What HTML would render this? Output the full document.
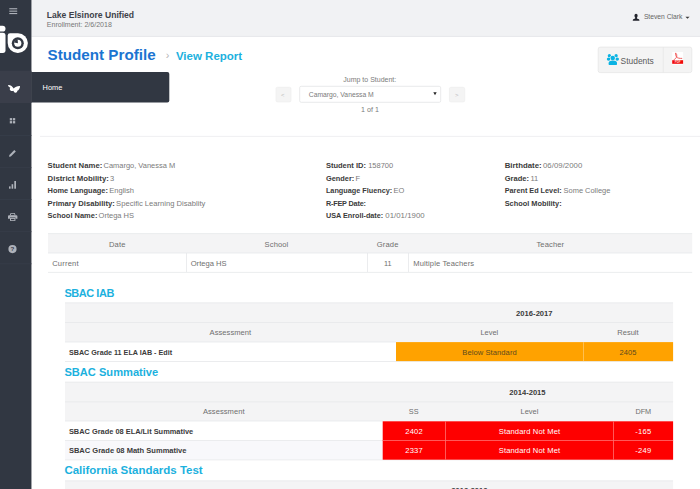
<!DOCTYPE html>
<html><head><meta charset="utf-8"><title>Student Profile</title>
<style>
*{box-sizing:border-box;margin:0;padding:0}
html,body{width:700px;height:489px;overflow:hidden;background:#fff;font-family:"Liberation Sans",sans-serif;color:#777}
.a{position:absolute}
.t{position:absolute;white-space:nowrap;line-height:1}
</style></head><body>
<svg class="a" style="left:0;top:0" width="700" height="489" viewBox="0 0 700 489">
  <!-- chrome -->
  <rect x="31.4" y="0" width="668.6" height="36" fill="#f1f2f4"/>
  <rect x="31.4" y="35.9" width="668.6" height="1" fill="#e6e7ea"/>
  <rect x="0" y="0" width="31.45" height="489" fill="#313742"/>
  <!-- active row + flyout -->
  <rect x="0" y="70.7" width="31.45" height="32.3" fill="#3a3e4a"/>
  <path d="M31.2 72 H167.3 Q169.3 72 169.3 74 V100.5 Q169.3 102.5 167.3 102.5 H31.2 Z" fill="#313742"/>
  <g fill="#383e4a">
    <rect x="0" y="135" width="31.45" height="0.8"/>
    <rect x="0" y="167.3" width="31.45" height="0.8"/>
    <rect x="0" y="199.2" width="31.45" height="0.8"/>
    <rect x="0" y="231.3" width="31.45" height="0.8"/>
    <rect x="0" y="263.4" width="31.45" height="0.8"/>
  </g>
  <!-- hamburger -->
  <g fill="#aeb2ba">
    <rect x="9.3" y="8.2" width="7.9" height="1.1"/><rect x="9.3" y="10.6" width="7.9" height="1.1"/><rect x="9.3" y="13" width="7.9" height="1.1"/>
  </g>
  <!-- logo -->
  <g fill="#fff">
    <rect x="-6" y="25.7" width="11.5" height="5.9" rx="2.9"/>
    <rect x="-6" y="32.8" width="11.5" height="20.1" rx="2.6"/>
    <path d="M7.7 35.6 Q7.7 33.3 10 33.3 L18 33.3 A9.9 9.8 0 0 1 18 52.9 L17.6 52.9 A9.9 9.9 0 0 1 7.7 43 Z"/>
  </g>
  <circle cx="17.8" cy="43.25" r="6" fill="#313742"/>
  <circle cx="17.8" cy="43.25" r="3.55" fill="#fff"/>
  <path d="M17.9 43.3 L14.1 42.6 A3.8 3.8 0 0 1 17.7 39.5 Z" fill="#313742"/>
  <!-- butterfly -->
  <path fill="#fff" d="M8 85 C10.5 84.8 12.6 86.6 13.7 88.6 C15 87 17.5 85.8 20 86 C20 88.5 18.8 90.2 17.3 90.8 C17.4 92.2 16 93.3 14.6 92.6 C14 92.2 13.6 91.4 13.5 90.8 C12.6 91.3 11 91.2 10.2 90.2 C9.4 89.2 9.8 88.2 10.4 87.8 C9.2 87.3 8.2 86.4 8 85 Z"/>
  <!-- grid -->
  <g fill="#aeb2ba">
    <rect x="9.8" y="118.1" width="2.3" height="2.3"/><rect x="12.9" y="118.1" width="2.3" height="2.3"/>
    <rect x="9.8" y="121.1" width="2.3" height="2.3"/><rect x="12.9" y="121.1" width="2.3" height="2.3"/>
  </g>
  <!-- pencil -->
  <path fill="#aeb2ba" d="M9 156.8 L9.4 155 L14.3 150 L15.8 151.5 L10.8 156.4 Z"/>
  <!-- bar chart -->
  <g fill="#aeb2ba">
    <rect x="9" y="186.4" width="1.6" height="2.3"/><rect x="11.6" y="184.2" width="1.6" height="4.5"/><rect x="14.3" y="181" width="1.7" height="7.7"/>
  </g>
  <!-- print -->
  <g fill="#aeb2ba">
    <path d="M10.6 213 H14.8 L15.6 215.2 H9.8 Z"/>
    <path d="M9 215.2 h7.4 a1 1 0 0 1 1 1 v2.6 h-1.9 v-1.3 h-5.6 v1.3 h-1.9 v-2.6 a1 1 0 0 1 1 -1 Z"/>
    <rect x="10" y="218" width="5.4" height="2.9"/>
  </g>
  <rect x="11" y="213.8" width="3.4" height="1.2" fill="#313742"/>
  <rect x="11" y="218.9" width="3.4" height="1.2" fill="#313742"/>
  <!-- help -->
  <circle cx="12.5" cy="249.1" r="4.1" fill="#aeb2ba"/>
  <text x="12.5" y="251.4" text-anchor="middle" font-family="Liberation Sans, sans-serif" font-weight="bold" font-size="6.2" fill="#313742">?</text>

  <!-- user icon + caret -->
  <ellipse cx="636.05" cy="15.75" rx="1.6" ry="1.95" fill="#23252d"/>
  <path fill="#23252d" d="M632.8 20.7 L632.8 19.9 Q632.8 18.9 634.6 18.7 L635.2 18.2 L635.2 17 L636.9 17 L636.9 18.2 L637.5 18.7 Q639.4 18.9 639.4 19.9 L639.4 20.7 Z"/>
  <path fill="#3a3a3a" d="M685.4 16.8 L689.6 16.8 L687.5 18.7 Z"/>

  <!-- buttons -->
  <path d="M600.2 47.1 H689.8 Q691.8 47.1 691.8 49.1 V70.6 Q691.8 72.6 689.8 72.6 H600.2 Q598.2 72.6 598.2 70.6 V49.1 Q598.2 47.1 600.2 47.1 Z" fill="#f4f4f4" stroke="#e6e6e6" stroke-width="0.8"/>
  <rect x="662.8" y="47.1" width="0.8" height="25.5" fill="#e6e6e6"/>
  <g fill="#0bb3e3">
    <circle cx="609.4" cy="55.7" r="1.65"/>
    <circle cx="616.1" cy="55.7" r="1.65"/>
    <ellipse cx="608.6" cy="59.1" rx="1.8" ry="1.6"/>
    <ellipse cx="617.2" cy="59.1" rx="1.8" ry="1.6"/>
    <circle cx="612.75" cy="57.95" r="2.75" fill="#f4f4f4"/>
    <circle cx="612.75" cy="57.95" r="2.3"/>
    <path d="M608.6 63 Q608.6 60.5 612.8 60.5 Q617 60.5 617 63 L617 63.9 Q617 65.1 615.8 65.1 L609.8 65.1 Q608.6 65.1 608.6 63.9 Z"/>
  </g>
  <!-- pdf icon -->
  <rect x="672.2" y="52" width="10.9" height="12.8" fill="#fff"/>
  <rect x="672.2" y="60.2" width="10.9" height="3.6" fill="#f00a0a"/>
  <g fill="none" stroke="#ee3b3b" stroke-width="0.95" stroke-linecap="round" stroke-linejoin="round" opacity="0.85">
    <path d="M675.7 53.3 C676.9 53.4 676.9 55.4 676.6 57 C677.6 58.2 679.6 58.5 681.8 58.4"/>
    <path d="M676.6 57 C676 58.2 675.2 59.2 674.1 59.6"/>
    <path d="M675.7 53.3 C675.2 54.6 676 56.2 676.6 57"/>
  </g>
  <text x="677.7" y="63.1" text-anchor="middle" font-family="Liberation Sans, sans-serif" font-weight="bold" font-size="3" fill="#ffd0d0">PDF</text>

  <!-- jump -->
  <rect x="276" y="87.3" width="15" height="14.6" rx="1.5" fill="#f4f4f4" stroke="#eeeeee" stroke-width="0.7"/>
  <rect x="449.4" y="87.3" width="15.3" height="14.6" rx="1.5" fill="#f4f4f4" stroke="#eeeeee" stroke-width="0.7"/>
  <rect x="299.7" y="86.3" width="141" height="16" rx="1.5" fill="#fff" stroke="#e3e4e6" stroke-width="0.8"/>
  <path d="M433.3 92.2 L436.7 92.2 L435 95.2 Z" fill="#222"/>
  <rect x="40" y="135.9" width="660" height="0.8" fill="#ececee"/>

  <!-- enrollment table -->
  <rect x="48" y="233.6" width="644.2" height="19.4" fill="#f4f4f5"/>
  <g fill="#e6e8ea">
    <rect x="48" y="233.3" width="644.2" height="0.8"/>
    <rect x="48" y="252.6" width="644.2" height="0.8"/>
    <rect x="48" y="271.9" width="644.2" height="0.8"/>
    <rect x="186" y="253" width="0.8" height="19"/>
    <rect x="367.2" y="253" width="0.8" height="19"/>
    <rect x="408" y="253" width="0.8" height="19"/>
  </g>

  <!-- IAB table -->
  <rect x="65" y="302.8" width="608.1" height="39.2" fill="#f4f4f5"/>
  <g fill="#e6e8ea">
    <rect x="65" y="302.5" width="608.1" height="0.8"/>
    <rect x="65" y="322.1" width="608.1" height="0.8"/>
    <rect x="65" y="341.6" width="331" height="0.8"/>
    <rect x="65" y="361" width="608.1" height="0.8"/>
  </g>
  <rect x="396" y="342.1" width="277.1" height="19" fill="#ffa200"/>
  <rect x="583" y="342.1" width="0.8" height="19" fill="#ffc766"/>

  <!-- Summative table -->
  <rect x="65" y="382" width="608.1" height="39" fill="#f4f4f5"/>
  <rect x="65" y="440.8" width="318" height="18.8" fill="#f8f8fb"/>
  <g fill="#e6e8ea">
    <rect x="65" y="381.7" width="608.1" height="0.8"/>
    <rect x="65" y="401.5" width="608.1" height="0.8"/>
    <rect x="65" y="420.6" width="318" height="0.8"/>
    <rect x="65" y="440.1" width="318" height="0.8"/>
    <rect x="65" y="459.5" width="608.1" height="0.8"/>
  </g>
  <rect x="382.7" y="421.3" width="290.4" height="38.4" fill="#fe0000"/>
  <g fill="#ff7070">
    <rect x="382.7" y="440.1" width="290.4" height="0.8"/>
    <rect x="445" y="421.3" width="0.8" height="38.4"/>
    <rect x="613.2" y="421.3" width="0.8" height="38.4"/>
  </g>

  <!-- CST table top -->
  <rect x="65" y="480.8" width="608.1" height="9" fill="#f4f4f5"/>
  <rect x="65" y="480.5" width="608.1" height="0.8" fill="#e6e8ea"/>
</svg>

<div class="t" style="left:46.8px;top:10px;font-size:8.58px;line-height:10px;color:#3e4249;font-weight:bold;">Lake Elsinore Unified</div>
<div class="t" style="left:46.8px;top:21px;font-size:7.05px;line-height:7px;color:#777;">Enrollment: 2/6/2018</div>
<div class="t" style="left:643.9px;top:13px;font-size:6.72px;line-height:7px;color:#666;">Steven Clark</div>
<div class="t" style="left:47.6px;top:46px;font-size:15.19px;line-height:17px;color:#1b74d1;font-weight:bold;">Student Profile</div>
<div class="t" style="left:165.7px;top:49px;font-size:11px;line-height:12px;color:#b5b5b5;">›</div>
<div class="t" style="left:175.9px;top:50px;font-size:11.5px;line-height:12px;color:#1cb1de;font-weight:bold;">View Report</div>
<div class="t" style="left:620.6px;top:56px;font-size:8.44px;line-height:10px;color:#5a5a5a;letter-spacing:-0.01px;">Students</div>
<div class="t" style="left:42.6px;top:83px;font-size:7.4px;line-height:9px;color:#fff;">Home</div>
<div class="t" style="left:343.3px;top:76px;font-size:7.01px;line-height:7px;color:#7b7b7b;">Jump to Student:</div>
<div class="t" style="left:308.8px;top:91px;font-size:6.79px;line-height:7px;color:#7b7b7b;letter-spacing:-0.01px;">Camargo, Vanessa M</div>
<div class="t" style="left:361.0px;top:106px;font-size:7.15px;line-height:8px;color:#7b7b7b;">1 of 1</div>
<div class="t" style="left:281.0px;top:92px;font-size:6.0px;line-height:6px;color:#bbb;">&lt;</div>
<div class="t" style="left:455.0px;top:92px;font-size:6.0px;line-height:6px;color:#bbb;">&gt;</div>
<div class="t" style="left:47.6px;top:161px;font-size:7.76px;line-height:9px;color:#3b3b3b;font-weight:bold;">Student Name:</div>
<div class="t" style="left:103.5px;top:161px;font-size:7.48px;line-height:9px;color:#7b7b7b;">Camargo, Vanessa M</div>
<div class="t" style="left:47.6px;top:174px;font-size:7.8px;line-height:9px;color:#3b3b3b;letter-spacing:0.01px;font-weight:bold;">District Mobility:</div>
<div class="t" style="left:110.0px;top:174px;font-size:7.5px;line-height:9px;color:#7b7b7b;">3</div>
<div class="t" style="left:47.6px;top:186px;font-size:7.45px;line-height:9px;color:#3b3b3b;font-weight:bold;">Home Language:</div>
<div class="t" style="left:109.2px;top:186px;font-size:7.57px;line-height:9px;color:#7b7b7b;">English</div>
<div class="t" style="left:47.6px;top:199px;font-size:7.67px;line-height:9px;color:#3b3b3b;font-weight:bold;">Primary Disability:</div>
<div class="t" style="left:116.1px;top:199px;font-size:7.62px;line-height:9px;color:#7b7b7b;">Specific Learning Disablity</div>
<div class="t" style="left:47.6px;top:211px;font-size:7.48px;line-height:9px;color:#3b3b3b;font-weight:bold;">School Name:</div>
<div class="t" style="left:98.6px;top:211px;font-size:7.5px;line-height:9px;color:#7b7b7b;">Ortega HS</div>
<div class="t" style="left:325.9px;top:161px;font-size:7.53px;line-height:9px;color:#3b3b3b;font-weight:bold;">Student ID:</div>
<div class="t" style="left:368.2px;top:161px;font-size:7.51px;line-height:9px;color:#7b7b7b;">158700</div>
<div class="t" style="left:325.9px;top:174px;font-size:7.42px;line-height:9px;color:#3b3b3b;font-weight:bold;">Gender:</div>
<div class="t" style="left:355.4px;top:174px;font-size:7.5px;line-height:9px;color:#7b7b7b;">F</div>
<div class="t" style="left:325.9px;top:186px;font-size:7.29px;line-height:9px;color:#3b3b3b;font-weight:bold;">Language Fluency:</div>
<div class="t" style="left:393.4px;top:186px;font-size:7.5px;line-height:9px;color:#7b7b7b;">EO</div>
<div class="t" style="left:325.9px;top:199px;font-size:7.27px;line-height:9px;color:#3b3b3b;letter-spacing:-0.18px;font-weight:bold;">R-FEP Date:</div>
<div class="t" style="left:325.9px;top:211px;font-size:7.27px;line-height:9px;color:#3b3b3b;letter-spacing:-0.01px;font-weight:bold;">USA Enroll-date:</div>
<div class="t" style="left:385.3px;top:211px;font-size:7.8px;line-height:9px;color:#7b7b7b;letter-spacing:0.03px;">01/01/1900</div>
<div class="t" style="left:504.7px;top:161px;font-size:7.8px;line-height:9px;color:#3b3b3b;letter-spacing:0.02px;font-weight:bold;">Birthdate:</div>
<div class="t" style="left:543.0px;top:161px;font-size:7.8px;line-height:9px;color:#7b7b7b;letter-spacing:0.03px;">06/09/2000</div>
<div class="t" style="left:504.7px;top:174px;font-size:7.52px;line-height:9px;color:#3b3b3b;font-weight:bold;">Grade:</div>
<div class="t" style="left:530.4px;top:174px;font-size:7.5px;line-height:9px;color:#7b7b7b;">11</div>
<div class="t" style="left:504.7px;top:186px;font-size:7.28px;line-height:9px;color:#3b3b3b;font-weight:bold;">Parent Ed Level:</div>
<div class="t" style="left:563.6px;top:186px;font-size:7.44px;line-height:9px;color:#7b7b7b;">Some College</div>
<div class="t" style="left:504.7px;top:199px;font-size:7.39px;line-height:9px;color:#3b3b3b;font-weight:bold;">School Mobility:</div>
<div class="t" style="left:109.0px;top:240px;font-size:7.59px;line-height:9px;color:#6f6f6f;letter-spacing:0.13px;">Date</div>
<div class="t" style="left:264.6px;top:240px;font-size:7.59px;line-height:9px;color:#6f6f6f;letter-spacing:0.10px;">School</div>
<div class="t" style="left:376.7px;top:240px;font-size:7.59px;line-height:9px;color:#6f6f6f;letter-spacing:0.16px;">Grade</div>
<div class="t" style="left:536.4px;top:240px;font-size:7.59px;line-height:9px;color:#6f6f6f;letter-spacing:0.12px;">Teacher</div>
<div class="t" style="left:52.2px;top:259px;font-size:7.59px;line-height:9px;color:#6f6f6f;letter-spacing:0.19px;">Current</div>
<div class="t" style="left:190.7px;top:259px;font-size:7.59px;line-height:9px;color:#6f6f6f;letter-spacing:0.01px;">Ortega HS</div>
<div class="t" style="left:384.0px;top:259px;font-size:7.3px;line-height:9px;color:#6f6f6f;">11</div>
<div class="t" style="left:413.2px;top:259px;font-size:7.59px;line-height:9px;color:#6f6f6f;letter-spacing:0.13px;">Multiple Teachers</div>
<div class="t" style="left:64.4px;top:287px;font-size:10.96px;line-height:12px;color:#1cb1de;letter-spacing:-0.43px;font-weight:bold;">SBAC IAB</div>
<div class="t" style="left:64.4px;top:366px;font-size:11.11px;line-height:12px;color:#1cb1de;font-weight:bold;">SBAC Summative</div>
<div class="t" style="left:64.4px;top:464px;font-size:11.49px;line-height:12px;color:#1cb1de;font-weight:bold;">California Standards Test</div>
<div class="t" style="left:516.1px;top:309px;font-size:7.59px;line-height:9px;color:#3b3b3b;letter-spacing:0.03px;font-weight:bold;">2016-2017</div>
<div class="t" style="left:209.6px;top:328px;font-size:7.59px;line-height:9px;color:#6f6f6f;letter-spacing:0.04px;">Assessment</div>
<div class="t" style="left:480.4px;top:328px;font-size:7.46px;line-height:9px;color:#6f6f6f;">Level</div>
<div class="t" style="left:617.3px;top:328px;font-size:7.53px;line-height:9px;color:#6f6f6f;">Result</div>
<div class="t" style="left:68.9px;top:348px;font-size:7.19px;line-height:9px;color:#3b3b3b;font-weight:bold;">SBAC Grade 11 ELA IAB - Edit</div>
<div class="t" style="left:462.3px;top:348px;font-size:7.59px;line-height:9px;color:#5d4a1e;letter-spacing:0.07px;">Below Standard</div>
<div class="t" style="left:619.6px;top:348px;font-size:7.52px;line-height:9px;color:#5d4a1e;">2405</div>
<div class="t" style="left:509.3px;top:388px;font-size:7.59px;line-height:9px;color:#3b3b3b;font-weight:bold;">2014-2015</div>
<div class="t" style="left:202.9px;top:407px;font-size:7.59px;line-height:9px;color:#6f6f6f;letter-spacing:0.04px;">Assessment</div>
<div class="t" style="left:408.8px;top:407px;font-size:7.3px;line-height:9px;color:#6f6f6f;">SS</div>
<div class="t" style="left:520.5px;top:407px;font-size:7.46px;line-height:9px;color:#6f6f6f;">Level</div>
<div class="t" style="left:635.4px;top:407px;font-size:7.3px;line-height:9px;color:#6f6f6f;">DFM</div>
<div class="t" style="left:68.9px;top:427px;font-size:7.42px;line-height:9px;color:#3b3b3b;font-weight:bold;">SBAC Grade 08 ELA/Lit Summative</div>
<div class="t" style="left:68.9px;top:446px;font-size:7.54px;line-height:9px;color:#3b3b3b;font-weight:bold;">SBAC Grade 08 Math Summative</div>
<div class="t" style="left:498.7px;top:427px;font-size:7.59px;line-height:9px;color:#fff;letter-spacing:0.14px;">Standard Not Met</div>
<div class="t" style="left:498.7px;top:446px;font-size:7.59px;line-height:9px;color:#fff;letter-spacing:0.14px;">Standard Not Met</div>
<div class="t" style="left:405.3px;top:427px;font-size:7.59px;line-height:9px;color:#fff;letter-spacing:0.15px;">2402</div>
<div class="t" style="left:405.3px;top:446px;font-size:7.59px;line-height:9px;color:#fff;letter-spacing:0.15px;">2337</div>
<div class="t" style="left:635.2px;top:427px;font-size:7.59px;line-height:9px;color:#fff;letter-spacing:0.31px;">-165</div>
<div class="t" style="left:635.2px;top:446px;font-size:7.59px;line-height:9px;color:#fff;letter-spacing:0.31px;">-249</div>
<div class="t" style="left:451.3px;top:486px;font-size:7.56px;line-height:9px;color:#3b3b3b;font-weight:bold;">2012-2013</div>
</body></html>
